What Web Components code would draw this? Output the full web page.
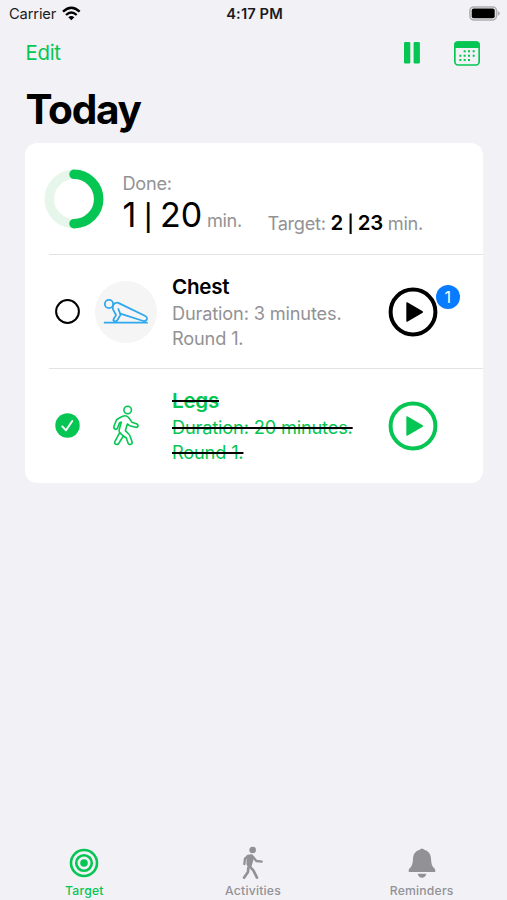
<!DOCTYPE html>
<html lang="en">
<head>
<meta charset="utf-8">
<title>Today</title>
<style>
    body{
        margin: 0;
        background: #f1f1f6;
        font-family: Inter, "Liberation Sans", sans-serif;
        color: #000;
        --green: #06c653;
        --gray: #929295;
    }
</style>
</head>
<body>
<today-app></today-app>
<script>
const icons = {
    wifi: `<svg width="19" height="15" viewBox="185 16 57 45"><g fill="none" stroke="#000" stroke-width="7"><path d="M188 33Q213 9 238 33"/><path d="M197 43Q213 28 229 43"/></g><path d="M204 50Q213 42 222 50L213 59Z"/></svg>`,
    battery: `<svg width="31" height="15" viewBox="0 0 31 15"><rect x=".9" y=".9" width="26.6" height="13" rx="3.8" fill="none" stroke="#adadb0" stroke-width="1.5"/><rect x="2.7" y="2.6" width="23" height="9.6" rx="2" fill="#000"/><path d="M28.8 5Q30.8 6 30.8 7.4T28.8 9.8Z" fill="#adadb0"/></svg>`,
    pause: `<svg width="16" height="22" viewBox="0 0 16 22" fill="currentColor"><rect width="6.3" height="21.6" rx="1.3"/><rect x="9.6" width="6.3" height="21.6" rx="1.3"/></svg>`,
    calendar: `<svg width="26" height="25" viewBox="222 120 78 75"><rect x="224.5" y="123" width="73" height="69" rx="10" fill="none" stroke="currentColor" stroke-width="5"/><path d="M222 141V132Q222 121 233 121H289Q300 121 300 132V141Z" fill="currentColor"/><g fill="currentColor"><path d="M251 148h6v6h-6zM264 148h6v6h-6zM278 148h6v6h-6zM238 161h6v6h-6zM251 161h6v6h-6zM264 161h6v6h-6zM278 161h6v6h-6zM238 174h6v6h-6zM251 174h6v6h-6zM264 174h6v6h-6z"/></g></svg>`,
    ring: `<svg width="60" height="60" viewBox="0 0 60 60" fill="none" stroke-width="9.5"><circle cx="30" cy="30" r="24.7" stroke="#e6f6eb"/><path d="M30 5.3A24.7 24.7 0 0 1 30 54.7" stroke="currentColor" stroke-linecap="round"/></svg>`,
    circle: `<svg width="25" height="25" viewBox="0 0 25 25"><circle cx="12.5" cy="12.5" r="11.4" fill="none" stroke="#000" stroke-width="2"/></svg>`,
    check: `<svg width="25" height="25" viewBox="0 0 25 25"><circle cx="12.5" cy="12.5" r="12.2" fill="currentColor"/><path d="M7.3 13.4L11 17.3L17.3 8" fill="none" stroke="#fff" stroke-width="1.9" stroke-linecap="round" stroke-linejoin="round"/></svg>`,
    pushup: `<svg width="46" height="28" viewBox="190 97 138 84" fill="none" stroke="#2fa8ef" stroke-width="5.4" stroke-linecap="round" stroke-linejoin="round"><circle cx="208" cy="115" r="12.5"/><path d="M195 171H322" stroke-width="5.5"/><path d="M222 165C218 160 229 152 229 148L220 131C217 122 222 111 232 111Q235 111 239 113L317 151Q323 154 322 160Q320 167 311 166L242 144"/><path d="M236 130L242 145Q244 149 240 152L232 165Q228 170 222 165"/></svg>`,
    walk: `<svg width="28" height="42" viewBox="217 91 84 126" fill="none" stroke="currentColor" stroke-width="4.8" stroke-linecap="round" stroke-linejoin="round"><circle cx="264" cy="106" r="11.3"/><path d="M249 125L235 132Q231 134 229 139L223 155Q221 162 227 164Q232 165 234 159L239 145L245 142L239 164Q237 171 240 174L226 200Q223 207 229 209Q234 211 238 205L251 184L260 190L265 205Q267 211 273 209Q279 207 277 201L271 184Q270 181 267 178L257 168L263 148L270 153L288 158Q294 159 295 154Q296 149 290 147L277 143L268 130Q261 120 249 125Z"/><path d="M240 174L251 184"/></svg>`,
    play: `<svg width="50" height="50" viewBox="0 0 50 50"><circle cx="25" cy="25" r="22.4" fill="none" stroke="currentColor" stroke-width="4"/><path d="M18.3 15.9V34.1Q18.3 35.2 19.3 34.7L34.7 25.7Q35.6 25 34.7 24.3L19.3 15.3Q18.3 14.9 18.3 15.9Z" fill="currentColor"/></svg>`,
    target: `<svg width="30" height="30" viewBox="0 0 30 30" fill="none" stroke="currentColor" stroke-width="2.6"><circle cx="15" cy="15" r="13"/><circle cx="15" cy="15" r="7.8"/><circle cx="15" cy="15" r="3.8" fill="currentColor" stroke="none"/></svg>`,
    activity: `<svg width="22" height="34" viewBox="129 33 66 102" fill="none" stroke="currentColor" stroke-linecap="round" stroke-linejoin="round"><circle cx="161" cy="45" r="10" fill="currentColor" stroke="none"/><path d="M147 64L157 62L161 66L154 91L147 88Z" fill="currentColor" stroke-width="9"/><path d="M146 64L138 71L136 87" stroke-width="7"/><path d="M163 67L172 78L188 80" stroke-width="7"/><path d="M149 91L163 106L174 128" stroke-width="8"/><path d="M148 98L147 111L135 128" stroke-width="8"/></svg>`,
    bell: `<svg width="28" height="30" viewBox="115 38 84 90" fill="currentColor"><path d="M149 44Q157 35 165 44C178 48 183 57 184 70C185 86 187 92 194 99Q199 105 196 110H118Q115 105 120 99C127 92 129 86 130 70C131 57 136 48 149 44Z"/><path d="M144 115H170Q167 127 157 127T144 115Z"/></svg>`
};

class UiIcon extends HTMLElement {
    constructor(){
        super();
        this.attachShadow({mode:"open"});
    }
    connectedCallback(){
        this.shadowRoot.innerHTML = `
            <style>
                :host{ display: block; flex: none; }
                svg{ display: block; }
            </style>
            ${icons[this.getAttribute("name")]}
        `;
    }
}
customElements.define('ui-icon', UiIcon)

class StatusBar extends HTMLElement {
    constructor(){
        super();
        this.attachShadow({mode:"open"});
    }
    connectedCallback(){
        this.shadowRoot.innerHTML = `
            <style>
                :host{
                    display: grid;
                    grid-template-columns: 1fr auto 1fr;
                    align-items: center;
                    height: 27px;
                    padding: 0 7px 0 9px;
                    font-size: 14.7px;
                    color: #1b1b1d;
                }
                .left{ display: flex; align-items: center; gap: 6px; letter-spacing: -.15px; }
                .time{ font-weight: 600; letter-spacing: .1px; }
                ui-icon{ justify-self: end; }
            </style>
            <div class="left"><span>${this.getAttribute("carrier")}</span><ui-icon name="wifi"></ui-icon></div>
            <span class="time">${this.getAttribute("time")}</span>
            <ui-icon name="battery"></ui-icon>
        `;
    }
}
customElements.define('status-bar', StatusBar)

class NavBar extends HTMLElement {
    constructor(){
        super();
        this.attachShadow({mode:"open"});
    }
    connectedCallback(){
        this.shadowRoot.innerHTML = `
            <style>
                :host{ display: block; padding: 0 27px 0 25.5px; }
                nav{
                    display: flex;
                    align-items: center;
                    height: 52px;
                    color: var(--green);
                    font-size: 20.4px;
                }
                .edit{ flex: 1; padding-bottom: 2px; letter-spacing: -.3px; }
                .actions{ display: flex; align-items: center; gap: 34px; }
                h1{
                    margin: 0;
                    height: 64px;
                    line-height: 61px;
                    font-size: 40.6px;
                    font-weight: 700;
                    letter-spacing: -1.3px;
                }
            </style>
            <nav>
                <span class="edit">Edit</span>
                <div class="actions"><ui-icon name="pause"></ui-icon><ui-icon name="calendar"></ui-icon></div>
            </nav>
            <h1><slot></slot></h1>
        `;
    }
}
customElements.define('nav-bar', NavBar)

class ProgressSummary extends HTMLElement {
    constructor(){
        super();
        this.attachShadow({mode:"open"});
    }
    //"1 | 20" con la barra un poco mas baja que los numeros
    getValue(name){
        return this.getAttribute(name).replace("|", "<i>|</i>");
    }
    connectedCallback(){
        this.shadowRoot.innerHTML = `
            <style>
                :host{
                    display: flex;
                    height: 111px;
                    box-sizing: border-box;
                    padding: 26px 0 0 19px;
                    color: var(--gray);
                    font-size: 18.2px;
                }
                ui-icon{ color: var(--green); }
                i{ font-style: normal; font-size: .76em; font-weight: 500; margin: 0 .04em; }
                .done{ margin-left: 18.5px; width: 145px; white-space: nowrap; }
                .label{ line-height: 29px; letter-spacing: -.3px; }
                .value{ line-height: 34px; letter-spacing: -.3px; }
                .value b{ font-size: 34px; font-weight: 400; color: #000; letter-spacing: -.1px; word-spacing: -3px; }
                .target{ padding-top: 37px; line-height: 34px; white-space: nowrap; letter-spacing: -.28px; }
                .target b{ font-size: 20.4px; font-weight: 600; color: #000; word-spacing: -1px; }
                .target i{ font-size: .84em; font-weight: 600; }
            </style>
            <ui-icon name="ring"></ui-icon>
            <div class="done">
                <div class="label">Done:</div>
                <div class="value"><b>${this.getValue("done")}</b> min.</div>
            </div>
            <div class="target">Target: <b>${this.getValue("target")}</b> min.</div>
        `;
    }
}
customElements.define('progress-summary', ProgressSummary)

class ExerciseRow extends HTMLElement {
    constructor(){
        super();
        this.attachShadow({mode:"open"});
    }
    connectedCallback(){
        const completed = this.hasAttribute("completed");
        const badge = this.getAttribute("badge");
        this.shadowRoot.innerHTML = `
            <style>
                :host{
                    display: flex;
                    align-items: center;
                    box-sizing: border-box;
                    height: 114px;
                    margin-left: 24px;
                    padding: 0 44.5px 0 6px;
                    border-top: 1px solid #e3e3e6;
                }
                :host([completed]){ color: var(--green); }
                .avatar{
                    width: 62px;
                    height: 62px;
                    margin: 0 15px;
                    border-radius: 50%;
                    display: flex;
                    align-items: center;
                    justify-content: center;
                    background: #f5f5f5;
                }
                .info{ flex: 1; white-space: nowrap; }
                .name{ font-size: 20.6px; line-height: 28.5px; font-weight: 600; letter-spacing: -.25px; }
                .detail{ font-size: 18.2px; line-height: 24.5px; letter-spacing: -.16px; color: var(--gray); }
                :host([completed]) .avatar{ background: none; }
                :host([completed]) .detail{ color: inherit; }
                :host([completed]) .info span{ text-decoration: line-through #000 1.7px; }
                .play{ position: relative; }
                .badge{
                    position: absolute;
                    left: 47.5px;
                    top: -2px;
                    width: 24.5px;
                    height: 24.5px;
                    border-radius: 50%;
                    background: #087cfe;
                    color: #fff;
                    font-size: 16px;
                    line-height: 24.5px;
                    text-align: center;
                }
            </style>
            <ui-icon name="${completed ? "check" : "circle"}"></ui-icon>
            <div class="avatar"><ui-icon name="${this.getAttribute("icon")}"></ui-icon></div>
            <div class="info">
                <div class="name"><span><slot></slot></span></div>
                <div class="detail"><span>Duration: ${this.getAttribute("minutes")} minutes.</span></div>
                <div class="detail"><span>Round ${this.getAttribute("round")}.</span></div>
            </div>
            <div class="play">
                <ui-icon name="play"></ui-icon>
                ${badge ? `<span class="badge">${badge}</span>` : ""}
            </div>
        `;
    }
}
customElements.define('exercise-row', ExerciseRow)

class TabItem extends HTMLElement {
    constructor(){
        super();
        this.attachShadow({mode:"open"});
    }
    connectedCallback(){
        this.shadowRoot.innerHTML = `
            <style>
                :host{
                    display: flex;
                    flex-direction: column;
                    align-items: center;
                    flex: 1;
                    color: #929296;
                    font-size: 12.2px;
                    font-weight: 500;
                    letter-spacing: .2px;
                }
                :host([active]){ color: var(--green); }
                .icon{ display: flex; align-items: center; height: 36px; }
                .label{ line-height: 19px; }
            </style>
            <div class="icon"><ui-icon name="${this.getAttribute("icon")}"></ui-icon></div>
            <div class="label"><slot></slot></div>
        `;
    }
}
customElements.define('tab-item', TabItem)

class TodayApp extends HTMLElement {
    constructor(){
        super();
        this.attachShadow({mode:"open"});
    }
    connectedCallback(){
        this.shadowRoot.innerHTML = `
            <style>
                :host{
                    display: flex;
                    flex-direction: column;
                    height: 900px;
                    overflow: hidden;
                }
                .card{
                    margin: 0 24.5px 0 25px;
                    background: #fff;
                    border-radius: 12px;
                    height: 339.5px;
                }
                .tabs{ display: flex; height: 55px; margin: auto 1px 0 0; }
            </style>
            <status-bar carrier="Carrier" time="4:17 PM"></status-bar>
            <nav-bar>Today</nav-bar>
            <div class="card">
                <progress-summary done="1 | 20" target="2 | 23"></progress-summary>
                <exercise-row icon="pushup" minutes="3" round="1" badge="1">Chest</exercise-row>
                <exercise-row icon="walk" minutes="20" round="1" completed>Legs</exercise-row>
            </div>
            <div class="tabs">
                <tab-item icon="target" active>Target</tab-item>
                <tab-item icon="activity">Activities</tab-item>
                <tab-item icon="bell">Reminders</tab-item>
            </div>
        `;
    }
}
customElements.define('today-app', TodayApp)
</script>
</body>
</html>
